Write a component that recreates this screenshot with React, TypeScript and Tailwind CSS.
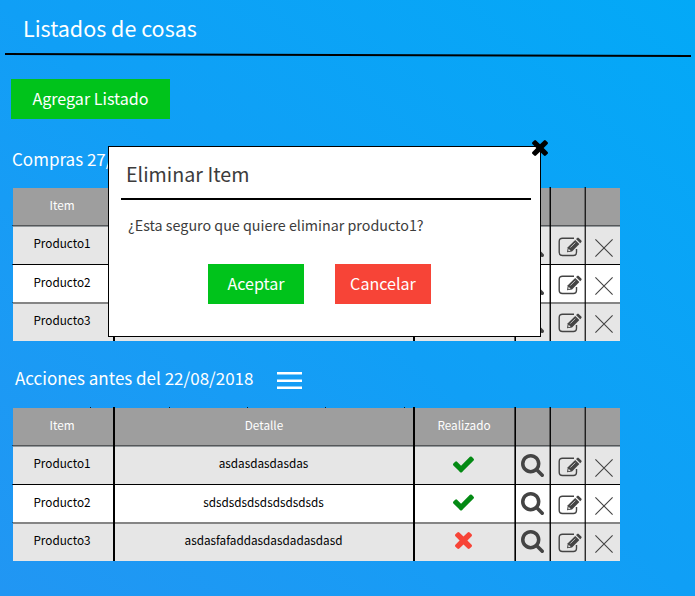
import React from "react";

type Mark = "yes" | "no";
type Row = { item: string; detail: string; mark: Mark };

const firstRows: Row[] = [
  { item: "Producto1", detail: "", mark: "yes" },
  { item: "Producto2", detail: "", mark: "yes" },
  { item: "Producto3", detail: "", mark: "no" },
];

const secondRows: Row[] = [
  { item: "Producto1", detail: "asdasdasdasdas", mark: "yes" },
  { item: "Producto2", detail: "sdsdsdsdsdsdsdsdsds", mark: "yes" },
  { item: "Producto3", detail: "asdasfafaddasdasdadasdasd", mark: "no" },
];

function CheckIcon() {
  return (
    <svg className="h-[17px] w-[21px] fill-[#048a14]" viewBox="121 334 1550 1188">
      <path d="M1671 566q0 40-28 68l-724 724-136 136q-28 28-68 28t-68-28l-136-136-362-362q-28-28-28-68t28-68l136-136q28-28 68-28t68 28l294 295 656-657q28-28 68-28t68 28l136 136q28 28 28 68z" />
    </svg>
  );
}

function TimesIcon({ className }: { className: string }) {
  return (
    <svg className={className} viewBox="302 366 1188 1188">
      <path d="M1490 1322q0 40-28 68l-136 136q-28 28-68 28t-68-28l-294-294-294 294q-28 28-68 28t-68-28l-136-136q-28-28-28-68t28-68l294-294-294-294q-28-28-28-68t28-68l136-136q28-28 68-28t68 28l294 294 294-294q28-28 68-28t68 28l136 136q28 28 28 68t-28 68l-294 294 294 294q28 28 28 68z" />
    </svg>
  );
}

function SearchIcon() {
  return (
    <svg className="size-[23px] fill-[#444]" viewBox="64 128 1664 1664">
      <path d="M1216 832q0-185-131.5-316.5t-316.5-131.5-316.5 131.5-131.5 316.5 131.5 316.5 316.5 131.5 316.5-131.5 131.5-316.5zm512 832q0 52-38 90t-90 38q-54 0-90-38l-343-342q-179 124-399 124-143 0-273.5-55.5t-225-150-150-225-55.5-273.5 55.5-273.5 150-225 225-150 273.5-55.5 273.5 55.5 225 150 150 225 55.5 273.5q0 220-124 399l343 343q37 37 37 90z" />
    </svg>
  );
}

function EditIcon() {
  return (
    <svg className="h-5 w-6" viewBox="0 0 24 20" fill="none">
      <path
        d="M16 1.2H4.5Q1.2 1.2 1.2 4.5V15.3Q1.2 18.5 4.5 18.5H15.3Q18.5 18.5 18.5 15.3V12"
        stroke="#444"
        strokeWidth="1.4"
      />
      <path d="M9 15.3L9.8 10.3L17.2 2.9L21.4 7.1L14 14.5Z" fill="#444" />
      <path d="M18 2.1L19.3.9Q20 .3 20.7 1L23.3 3.6Q24 4.3 23.4 5L22.2 6.3Z" fill="#444" />
      <path d="M12.3 10.6L17.3 5.6" stroke="#ddd" strokeWidth="0.8" />
      <path d="M10.6 11.8L12.6 13.8L10.2 14.2Z" fill="#e6e6e6" />
    </svg>
  );
}

function ThinCross() {
  return (
    <svg className="size-[18px]" viewBox="0 0 18 18" stroke="#444" strokeWidth="1.1">
      <path d="M.4 .4L17.6 17.6M17.6 .4L.4 17.6" />
    </svg>
  );
}

const columns = "grid grid-cols-[101px_300px_101px_35px_35px_35px]";
const lines = [
  "left-[100px] border-l border-black bg-black",
  "left-[400px] border-l border-black bg-black",
  "left-[501px] border-l border-black/60 bg-black",
  "left-[536px] border-l border-black/45 bg-black/95",
  "left-[571px] border-l border-black/35 bg-black/80",
];
const rowStyles = [
  "h-[38px] border-t border-[#93989b] bg-[#e6e6e6]",
  "h-[38px] border-t border-black bg-white",
  "h-[39px] border-t-2 border-[#858585] bg-[#e6e6e6]",
];
const textPads = ["pb-[5px]", "pb-[4px]", "pb-[6px]"];
const markPads = ["pb-[2px]", "pb-[2px]", "pb-[5px]"];
const searchPads = ["", "", "pb-[2px]"];
const editPads = ["pt-[3px]", "pt-[3px]", "pt-px"];
const crossPads = ["pt-[5px]", "pt-[5px]", "pt-[3px]"];
const edges = ["top-[37px] bg-black/50", "top-[76px] bg-black/70", "top-[114px] bg-black/40"];
const ticks = ["left-[77px]", "left-[156px]", "left-[234px]", "left-[312px]", "left-[391px]"];

function ItemTable({ rows, ticked = false }: { rows: Row[]; ticked?: boolean }) {
  return (
    <div className="relative ml-[13px] w-[607px] text-[11.75px] leading-4 text-black">
      <div className={`${columns} h-[38px] border-b border-[#555759] bg-[#9e9e9e] text-white`}>
        <div className="pt-[9px] pr-[3px] text-center">Item</div>
        <div className="pt-[9px] text-center">Detalle</div>
        <div className="pt-[9px] pr-px text-center">Realizado</div>
      </div>
      {rows.map((row, i) => (
        <div key={row.item} className={`${columns} ${rowStyles[i]}`}>
          <div className={`flex items-center justify-center pr-[3px] ${textPads[i]}`}>{row.item}</div>
          <div className={`flex items-center justify-center pr-px ${textPads[i]}`}>{row.detail}</div>
          <div className={`flex items-center justify-center pr-[2px] ${markPads[i]}`}>
            {row.mark === "yes" ? <CheckIcon /> : <TimesIcon className="size-[17px] fill-[#f74437]" />}
          </div>
          <div className={`flex items-center justify-center ${searchPads[i]}`}><SearchIcon /></div>
          <div className={`flex items-center justify-center pl-1 ${editPads[i]}`}><EditIcon /></div>
          <div className={`flex items-center justify-center pl-[2px] ${crossPads[i]}`}><ThinCross /></div>
        </div>
      ))}
      {lines.map((line) => (
        <div key={line} className={`absolute -top-px bottom-0 w-0.5 bg-clip-padding ${line}`} />
      ))}
      {edges.map((edge) => (
        <div key={edge} className={`absolute -left-px h-px w-px ${edge}`} />
      ))}
      {ticked && ticks.map((tick) => (
        <div key={tick} className={`absolute -top-px h-px w-px bg-black/80 ${tick}`} />
      ))}
    </div>
  );
}

function Dialog() {
  return (
    <div className="absolute top-[146px] left-[108px] h-[191px] w-[433px] border border-black bg-white text-[#3c3c3c]">
      <h2 className="ml-[17px] pt-3 text-[19.7px] leading-[30px]">Eliminar Item</h2>
      <div className="mt-[9px] ml-3 h-0.5 w-[410px] bg-black" />
      <p className="mt-[13px] ml-[19px] text-[14.3px] leading-6">¿Esta seguro que quiere eliminar producto1?</p>
      <div className="mt-[27px] ml-[99px] flex gap-[31px] text-[16.1px] leading-[38px] text-white">
        <button className="h-10 w-24 bg-[#00c31b] pb-0.5">Aceptar</button>
        <button className="h-10 w-24 bg-[#f74437] pb-0.5">Cancelar</button>
      </div>
      <TimesIcon className="absolute -top-[7px] -right-2 size-4 fill-black" />
    </div>
  );
}

export default function App() {
  return (
    <main className="relative h-[596px] w-[695px] overflow-hidden bg-linear-to-tr from-[#2196f3] via-[#109ff6] to-[#03a9f7] font-['Noto_Sans_CJK_SC',sans-serif] text-white">
      <h1 className="h-[53px] pt-3 pl-[23px] text-[21.5px] leading-8">Listados de cosas</h1>
      <svg className="ml-[5px] h-1 w-[686px]" viewBox="0 0 686 4">
        <path d="M0 1L686 3" stroke="black" strokeWidth="2" />
      </svg>
      <button className="mt-[22px] ml-[11px] block h-10 w-[159px] bg-[#00c31b] pb-0.5 text-[16.1px] leading-[38px]">
        Agregar Listado
      </button>
      <h2 className="h-[69px] pt-[27px] pl-3 text-[17px] leading-[26px]">Compras 27/</h2>
      <ItemTable rows={firstRows} />
      <div className="flex h-[67px] pt-[24px] pl-[15px] text-[17px] leading-[26px]">
        <h2 className="w-[262px]">Acciones antes del 22/08/2018</h2>
        <svg className="mt-[7px] h-[18px] w-[25px]" viewBox="0 0 25 18" stroke="white" strokeWidth="2.4">
          <path d="M0 1.2H25M0 8.7H25M0 15.8H25" />
        </svg>
      </div>
      <ItemTable rows={secondRows} ticked />
      <Dialog />
    </main>
  );
}
